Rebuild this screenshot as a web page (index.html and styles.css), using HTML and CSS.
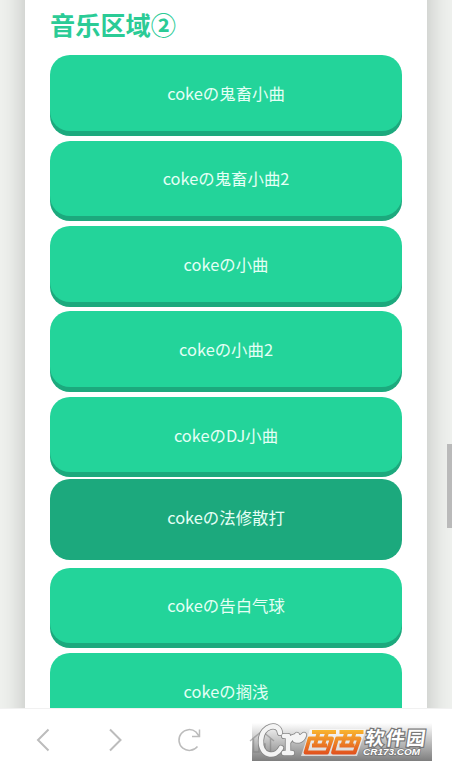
FILE: index.html
```html
<!DOCTYPE html>
<html lang="zh-CN">
<head>
<meta charset="utf-8">
<title>音乐区域</title>
<link rel="stylesheet" href="styles.css">
</head>
<body>
<div class="app">
  <div class="viewport">
    <main class="panel">
      <h2 class="title">音乐区域②</h2>
      <div class="list">
        <button class="btn">cokeの鬼畜小曲</button>
        <button class="btn">cokeの鬼畜小曲2</button>
        <button class="btn">cokeの小曲</button>
        <button class="btn">cokeの小曲2</button>
        <button class="btn">cokeのDJ小曲</button>
        <button class="btn pressed">cokeの法修散打</button>
        <button class="btn">cokeの告白气球</button>
        <button class="btn">cokeの搁浅</button>
      </div>
    </main>
    <div class="scrollbar"></div>
  </div>
  <nav class="toolbar">
    <svg class="icon" viewBox="0 0 28 28"><path d="M20.500 3.500 10 14 20.500 24.500"/></svg>
    <svg class="icon" viewBox="0 0 28 28"><path d="M9 3.500 19.500 14 9 24.500"/></svg>
    <svg class="icon thin" viewBox="0 0 28 28"><path d="M22.500 20.500A10.400 10.400 0 1 1 21 6L24 10M24.500 3.500V10.500H17"/></svg>
    <svg class="icon thin" viewBox="0 0 28 28"><path d="M2 15 14 5 26 15M5.500 12.500V26H11V18H17V26H22.500V12.500"/></svg>
  </nav>
  <svg class="mark" viewBox="0 0 180 38">
    <defs>
      <linearGradient id="shade" x1="0" y1="0" x2="0" y2="1"><stop offset="0" stop-color="#777" stop-opacity="0"/><stop offset="1" stop-color="#777" stop-opacity=".95"/></linearGradient>
      <linearGradient id="fire" gradientUnits="userSpaceOnUse" x1="0" y1="7" x2="0" y2="32"><stop offset="0" stop-color="#f9b52f"/><stop offset="1" stop-color="#e04d1d"/></linearGradient>
    </defs>
    <rect width="180" height="38" fill="url(#shade)"/>
    <g fill="none" stroke-linecap="round" stroke-linejoin="round">
      <g stroke="#858585" stroke-width="6.200">
        <path d="M28 10C27 -1 10 2 9 17C8 33 23 36 29 25"/>
        <path d="M32 13H36V30M32 30H40M37 18C40 12 43 15 45 12C47 17 51 13 52 12C50 18 46 18 43 17"/>
      </g>
      <g stroke="#f4f4f4" stroke-width="4.600">
        <path d="M28 10C27 -1 10 2 9 17C8 33 23 36 29 25"/>
        <path d="M32 13H36V30M32 30H40M37 18C40 12 43 15 45 12C47 17 51 13 52 12C50 18 46 18 43 17"/>
      </g>
    </g>
    <path d="M58 6H114L105 33H49Z" fill="#fff" opacity=".65"/>
    <g fill="none" stroke="url(#fire)" stroke-width="3.800" stroke-linejoin="round">
      <path id="west" d="M60 9H84M57.500 15.500H80L75 29.500H53.500ZM66.500 10 63 22M75 10 71 22M60 22.500H75"/>
      <use href="#west" x="27.500"/>
    </g>
    <g transform="translate(112.500 21.500) skewX(-8)">
      <text class="soft-name" textLength="60" lengthAdjust="spacing">软件园</text>
    </g>
    <text class="soft-site" x="111" y="32" textLength="57" lengthAdjust="spacingAndGlyphs">CR173.COM</text>
  </svg>
</div>
</body>
</html>
```
FILE: styles.css
```css
* { box-sizing: border-box; }
body {
  margin: 0;
  font-family: "Noto Sans CJK SC", "Noto Sans", sans-serif;
  background: #fff;
}
.app {
  position: relative;
  display: flex;
  flex-direction: column;
  height: 771px;
  overflow: hidden;
}
.viewport {
  position: relative;
  display: flow-root;
  height: 708px;
  overflow: hidden;
  background: #eff1ee;
}
.panel {
  width: 402px;
  height: 800px;
  margin: -30px 25px 0;
  padding: 35.500px 25px 0;
  background: #fff;
  box-shadow: 0 0 25px rgba(0, 0, 0, .22);
}
.title {
  height: 49.800px;
  margin: 0;
  font-size: 25.200px;
  line-height: 36px;
  font-weight: 700;
  color: #2bcb96;
}
.list {
  display: flex;
  flex-direction: column;
  gap: 9.900px;
}
.btn {
  flex: none;
  display: block;
  width: 352px;
  height: 75.500px;
  padding: 0;
  border: 0;
  border-radius: 20px;
  background: #23d49a;
  box-shadow: 0 5px #1ca97d;
  color: #e4fff5;
  font: 400 16.400px/24px "Noto Sans CJK SC", sans-serif;
}
.pressed {
  position: relative;
  top: -3px;
  background: #1ca97d;
}
.scrollbar {
  position: absolute;
  top: 444px;
  right: 0;
  width: 5px;
  height: 84px;
  background: #bababa;
}
.toolbar {
  display: flex;
  align-items: flex-start;
  gap: 45.500px;
  height: 63px;
  padding: 17px 28px 0 27.500px;
  border-top: 1px solid #f1f1f1;
  background: #fff;
}
.icon {
  flex: none;
  width: 28px;
  height: 28px;
  fill: none;
  stroke: #bcbcbc;
  stroke-width: 2;
}
.thin { stroke-width: 1.500; }
.mark {
  position: absolute;
  left: 252px;
  top: 723px;
  width: 180px;
  height: 38px;
}
.soft-name {
  font: 700 19px "Noto Sans CJK SC", sans-serif;
  fill: #fff;
  stroke: #777;
  stroke-width: 2.500;
  paint-order: stroke;
}
.soft-site {
  font: italic 700 9.500px "Liberation Sans", sans-serif;
  fill: #fff;
  stroke: #777;
  stroke-width: 1.500;
  paint-order: stroke;
}
```
